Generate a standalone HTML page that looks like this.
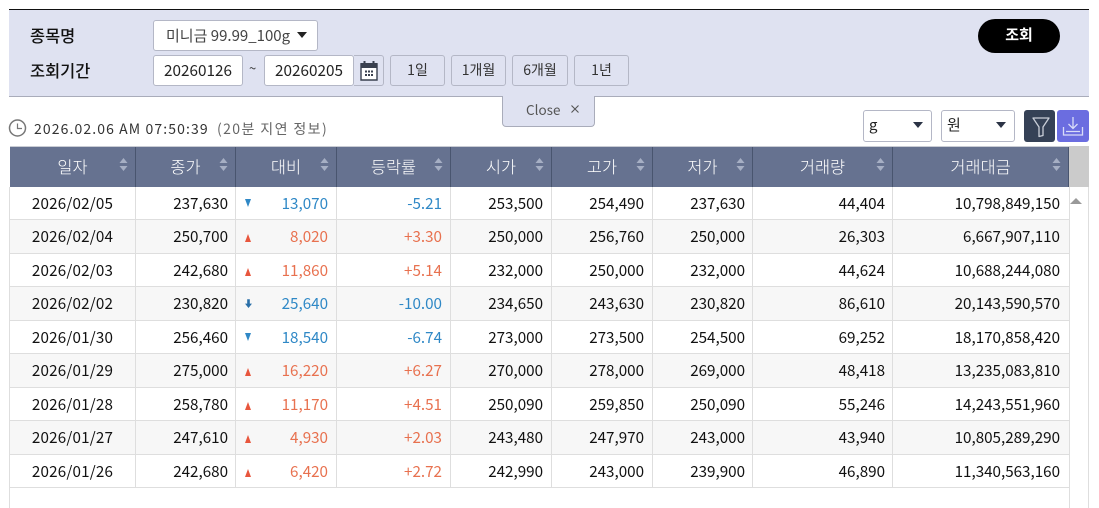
<!DOCTYPE html>
<html><head><meta charset="utf-8">
<style>
html,body{margin:0;padding:0;background:#fff;}
body{width:1099px;height:508px;overflow:hidden;position:relative;font-family:"Noto Sans CJK KR","Liberation Sans",sans-serif;color:#111;}
.a{position:absolute;box-sizing:border-box;white-space:nowrap;}
.box{border:1px solid #b4b7c6;border-radius:3px;background:#fff;font-size:15.3px;line-height:29px;text-align:center;color:#222;}
.btn{background:#dfe2f1;color:#333;font-size:14px;line-height:29px;top:55px;height:31px;border:1px solid #b4b7c6;border-radius:3px;text-align:center;}
.lbl{font-size:16.4px;font-weight:500;color:#111;line-height:20px;}
.hd{top:146px;height:41px;background:#667290;color:#fff;font-size:16.4px;font-weight:300;line-height:40px;text-align:center;border-right:1px solid #49556f;}
.sort{position:absolute;top:10px;width:9px;height:17px;}
.c{font-size:15.2px;line-height:20px;color:#111;text-align:right;}
.d{text-align:center;letter-spacing:.2px;left:10px;width:125px;}
.row{left:10px;width:1059px;height:34px;border-bottom:1px solid #dedede;}
.v{background:#dedede;width:1px;top:187px;height:301px;}
.dn{color:#2f88c6}.up{color:#e8714f}
.sel{border:1px solid #b4b7c6;border-radius:3px;background:#fff;top:110px;height:32px;font-size:15px;line-height:28px;padding-left:5px;color:#222;}
.tri{position:absolute;width:0;height:0;border-left:5.5px solid transparent;border-right:5.5px solid transparent;border-top:6.500px solid #2b3345;}
.u{left:245px;width:0;height:0;border-left:3.5px solid transparent;border-right:3.5px solid transparent;border-bottom:8px solid #e8563d;}
.w{left:245px;width:0;height:0;border-left:3.5px solid transparent;border-right:3.5px solid transparent;border-top:8px solid #2f88c6;}
</style></head><body>
<div class="a" style="left:9px;top:9px;width:1080px;height:88px;background:#dfe2f1;border-top:1px solid #111;border-bottom:1px solid #a9acba;"></div>
<div class="a lbl" style="left:30px;top:25px;">종목명</div>
<div class="a lbl" style="left:30px;top:60px;">조회기간</div>
<div class="a box" style="left:153px;top:20px;width:165px;height:31px;text-align:left;padding-left:12px;font-size:15px;color:#444;">미니금 99.99_100g</div>
<div class="tri" style="left:297px;top:32px;border-top-color:#222;"></div>
<div class="a box" style="left:153px;top:55px;width:90px;height:31px;">20260126</div>
<div class="a" style="left:249px;top:58px;font-size:13px;color:#333;line-height:20px;">~</div>
<div class="a box" style="left:264px;top:55px;width:90px;height:31px;">20260205</div>
<div class="a" style="left:354px;top:55px;width:30px;height:31px;border:1px solid #b4b7c6;border-left:none;border-radius:0 3px 3px 0;background:#dfe2f1;"></div>
<svg class="a" style="left:360px;top:60px;" width="18" height="21" viewBox="0 0 18 21"><path d="M1 4h16v16H1z" fill="#fff" stroke="#39404f" stroke-width="1.4"/><rect x="0.5" y="3" width="17" height="5" fill="#39404f"/><rect x="3.5" y="1" width="2" height="4" fill="#39404f"/><rect x="12.5" y="1" width="2" height="4" fill="#39404f"/><path d="M5 10.500h2v2H5zM8 10.500h2v2H8zM11 10.500h2v2h-2zM5 14h2v2H5zM8 14h2v2H8zM11 14h2v2h-2z" fill="#39404f"/></svg>
<div class="a btn" style="left:390px;width:55px;">1일</div>
<div class="a btn" style="left:451px;width:55px;">1개월</div>
<div class="a btn" style="left:512px;width:56px;">6개월</div>
<div class="a btn" style="left:574px;width:55px;">1년</div>
<div class="a" style="left:502px;top:96px;width:93px;height:31px;background:#dfe2f1;border:1px solid #a9acba;border-top:none;border-radius:0 0 4px 4px;font-size:13.500px;line-height:27px;color:#555;padding-left:23px;">Close</div>
<svg class="a" style="left:571px;top:105px;" width="8" height="8" viewBox="0 0 8 8"><path d="M.5.500l7 7M7.500.500l-7 7" stroke="#555" stroke-width="1.1" fill="none"/></svg>
<div class="a" style="left:978px;top:19px;width:82px;height:34px;background:#000;border-radius:17px;color:#fff;font-size:15px;font-weight:700;line-height:31px;text-align:center;">조회</div>

<svg class="a" style="left:8px;top:118px;" width="20" height="20" viewBox="0 0 20 20"><circle cx="9.500" cy="10" r="8" fill="#fff" stroke="#777" stroke-width="1.500"/><path d="M9.500 5.500V10.500H14" fill="none" stroke="#777" stroke-width="1.200"/></svg>
<div class="a" style="left:34px;top:119px;font-size:14px;line-height:20px;color:#333;letter-spacing:1.1px;">2026.02.06 AM 07:50:39</div>
<div class="a" style="left:217px;top:119px;font-size:14px;line-height:20px;color:#666;letter-spacing:1.4px;">(20분 지연 정보)</div>

<div class="a sel" style="left:863px;width:69px;">g</div><div class="tri" style="left:913px;top:122px;"></div>
<div class="a sel" style="left:941px;width:74px;">원</div><div class="tri" style="left:996px;top:122px;"></div>
<div class="a" style="left:1024px;top:110px;width:31px;height:32px;background:#354156;border-radius:3px;"></div>
<svg class="a" style="left:1032px;top:116px;" width="18" height="22" viewBox="0 0 18 22"><path d="M1 2h16l-6 9v8.500l-4 1v-9.500z" fill="none" stroke="#c9ced8" stroke-width="1.300" stroke-linejoin="round"/></svg>
<div class="a" style="left:1057px;top:110px;width:32px;height:32px;background:#6b6de0;border-radius:3px;"></div>
<svg class="a" style="left:1062px;top:115px;" width="22" height="22" viewBox="0 0 22 22"><path d="M11 2v11M6.500 9l4.500 4.500 4.500-4.500M1.500 12v8h19v-8M4 16.500h14" fill="none" stroke="#d9dcf8" stroke-width="1.300"/></svg>

<div class="a" style="left:10px;top:146px;width:1059px;height:1px;background:#c9ccd4;z-index:3;"></div>
<div class="a hd" style="left:10px;width:126px;"><span>일자</span><svg class="sort" style="left:109px" viewBox="0 0 9 17"><path d="M4.500 2L8.500 7H.5zM4.500 15L.5 10h8z" fill="#a6afc4"/></svg></div>
<div class="a hd" style="left:136px;width:100px;"><span>종가</span><svg class="sort" style="left:83px" viewBox="0 0 9 17"><path d="M4.500 2L8.500 7H.5zM4.500 15L.5 10h8z" fill="#a6afc4"/></svg></div>
<div class="a hd" style="left:236px;width:101px;"><span>대비</span><svg class="sort" style="left:84px" viewBox="0 0 9 17"><path d="M4.500 2L8.500 7H.5zM4.500 15L.5 10h8z" fill="#a6afc4"/></svg></div>
<div class="a hd" style="left:337px;width:114px;"><span>등락률</span><svg class="sort" style="left:97px" viewBox="0 0 9 17"><path d="M4.500 2L8.500 7H.5zM4.500 15L.5 10h8z" fill="#a6afc4"/></svg></div>
<div class="a hd" style="left:451px;width:101px;"><span>시가</span><svg class="sort" style="left:84px" viewBox="0 0 9 17"><path d="M4.500 2L8.500 7H.5zM4.500 15L.5 10h8z" fill="#a6afc4"/></svg></div>
<div class="a hd" style="left:552px;width:101px;"><span>고가</span><svg class="sort" style="left:84px" viewBox="0 0 9 17"><path d="M4.500 2L8.500 7H.5zM4.500 15L.5 10h8z" fill="#a6afc4"/></svg></div>
<div class="a hd" style="left:653px;width:100px;"><span>저가</span><svg class="sort" style="left:83px" viewBox="0 0 9 17"><path d="M4.500 2L8.500 7H.5zM4.500 15L.5 10h8z" fill="#a6afc4"/></svg></div>
<div class="a hd" style="left:753px;width:140px;"><span>거래량</span><svg class="sort" style="left:123px" viewBox="0 0 9 17"><path d="M4.500 2L8.500 7H.5zM4.500 15L.5 10h8z" fill="#a6afc4"/></svg></div>
<div class="a hd" style="left:893px;width:176px;"><span>거래대금</span><svg class="sort" style="left:159px" viewBox="0 0 9 17"><path d="M4.500 2L8.500 7H.5zM4.500 15L.5 10h8z" fill="#a6afc4"/></svg></div>

<div class="a" style="left:1069px;top:146px;width:20px;height:41px;background:#cbcbcb;"></div>
<div class="a" style="left:1069px;top:187px;width:20px;height:321px;background:#fff;border-right:1px solid #dedede;"></div>
<div class="a" style="left:1070px;top:198px;width:0;height:0;border-left:6px solid transparent;border-right:6px solid transparent;border-bottom:6px solid #999;"></div>

<div class="a row" style="top:187px;height:33px;background:#fff;"></div>
<div class="a row" style="top:220px;background:#f7f7f7;"></div>
<div class="a row" style="top:254px;height:33px;background:#fff;"></div>
<div class="a row" style="top:287px;background:#f7f7f7;"></div>
<div class="a row" style="top:321px;height:33px;background:#fff;"></div>
<div class="a row" style="top:354px;background:#f7f7f7;"></div>
<div class="a row" style="top:388px;height:33px;background:#fff;"></div>
<div class="a row" style="top:421px;background:#f7f7f7;"></div>
<div class="a row" style="top:455px;height:33px;background:#fff;"></div>

<div class="a" style="left:9px;top:187px;width:1px;height:321px;background:#dedede;"></div>
<div class="a v" style="left:135px;"></div>
<div class="a v" style="left:235px;"></div>
<div class="a v" style="left:336px;"></div>
<div class="a v" style="left:450px;"></div>
<div class="a v" style="left:551px;"></div>
<div class="a v" style="left:652px;"></div>
<div class="a v" style="left:752px;"></div>
<div class="a v" style="left:892px;"></div>
<div class="a" style="left:1069px;top:187px;width:1px;height:321px;background:#dedede;"></div>

<!-- rows -->
<div class="a c d" style="top:193px;">2026/02/05</div><div class="a c" style="left:136px;width:92px;top:193px;">237,630</div><div class="a w" style="top:199px;"></div><div class="a c dn" style="left:236px;width:92px;top:193px;">13,070</div><div class="a c dn" style="left:337px;width:105px;top:193px;">-5.21</div><div class="a c" style="left:451px;width:92px;top:193px;">253,500</div><div class="a c" style="left:552px;width:92px;top:193px;">254,490</div><div class="a c" style="left:653px;width:92px;top:193px;">237,630</div><div class="a c" style="left:753px;width:132px;top:193px;">44,404</div><div class="a c" style="left:893px;width:167px;top:193px;">10,798,849,150</div>

<div class="a c d" style="top:226px;">2026/02/04</div><div class="a c" style="left:136px;width:92px;top:226px;">250,700</div><div class="a u" style="top:234px;"></div><div class="a c up" style="left:236px;width:92px;top:226px;">8,020</div><div class="a c up" style="left:337px;width:105px;top:226px;">+3.30</div><div class="a c" style="left:451px;width:92px;top:226px;">250,000</div><div class="a c" style="left:552px;width:92px;top:226px;">256,760</div><div class="a c" style="left:653px;width:92px;top:226px;">250,000</div><div class="a c" style="left:753px;width:132px;top:226px;">26,303</div><div class="a c" style="left:893px;width:167px;top:226px;">6,667,907,110</div>

<div class="a c d" style="top:260px;">2026/02/03</div><div class="a c" style="left:136px;width:92px;top:260px;">242,680</div><div class="a u" style="top:268px;"></div><div class="a c up" style="left:236px;width:92px;top:260px;">11,860</div><div class="a c up" style="left:337px;width:105px;top:260px;">+5.14</div><div class="a c" style="left:451px;width:92px;top:260px;">232,000</div><div class="a c" style="left:552px;width:92px;top:260px;">250,000</div><div class="a c" style="left:653px;width:92px;top:260px;">232,000</div><div class="a c" style="left:753px;width:132px;top:260px;">44,624</div><div class="a c" style="left:893px;width:167px;top:260px;">10,688,244,080</div>

<div class="a c d" style="top:293px;">2026/02/02</div><div class="a c" style="left:136px;width:92px;top:293px;">230,820</div><svg class="a" style="left:245px;top:299px;" width="7" height="10" viewBox="0 0 8 11"><path d="M2.500 0h3v5H8l-4 5-4-5h2.500z" fill="#2a6fa8"/></svg><div class="a c dn" style="left:236px;width:92px;top:293px;">25,640</div><div class="a c dn" style="left:337px;width:105px;top:293px;">-10.00</div><div class="a c" style="left:451px;width:92px;top:293px;">234,650</div><div class="a c" style="left:552px;width:92px;top:293px;">243,630</div><div class="a c" style="left:653px;width:92px;top:293px;">230,820</div><div class="a c" style="left:753px;width:132px;top:293px;">86,610</div><div class="a c" style="left:893px;width:167px;top:293px;">20,143,590,570</div>

<div class="a c d" style="top:327px;">2026/01/30</div><div class="a c" style="left:136px;width:92px;top:327px;">256,460</div><div class="a w" style="top:333px;"></div><div class="a c dn" style="left:236px;width:92px;top:327px;">18,540</div><div class="a c dn" style="left:337px;width:105px;top:327px;">-6.74</div><div class="a c" style="left:451px;width:92px;top:327px;">273,000</div><div class="a c" style="left:552px;width:92px;top:327px;">273,500</div><div class="a c" style="left:653px;width:92px;top:327px;">254,500</div><div class="a c" style="left:753px;width:132px;top:327px;">69,252</div><div class="a c" style="left:893px;width:167px;top:327px;">18,170,858,420</div>

<div class="a c d" style="top:360px;">2026/01/29</div><div class="a c" style="left:136px;width:92px;top:360px;">275,000</div><div class="a u" style="top:368px;"></div><div class="a c up" style="left:236px;width:92px;top:360px;">16,220</div><div class="a c up" style="left:337px;width:105px;top:360px;">+6.27</div><div class="a c" style="left:451px;width:92px;top:360px;">270,000</div><div class="a c" style="left:552px;width:92px;top:360px;">278,000</div><div class="a c" style="left:653px;width:92px;top:360px;">269,000</div><div class="a c" style="left:753px;width:132px;top:360px;">48,418</div><div class="a c" style="left:893px;width:167px;top:360px;">13,235,083,810</div>

<div class="a c d" style="top:394px;">2026/01/28</div><div class="a c" style="left:136px;width:92px;top:394px;">258,780</div><div class="a u" style="top:402px;"></div><div class="a c up" style="left:236px;width:92px;top:394px;">11,170</div><div class="a c up" style="left:337px;width:105px;top:394px;">+4.51</div><div class="a c" style="left:451px;width:92px;top:394px;">250,090</div><div class="a c" style="left:552px;width:92px;top:394px;">259,850</div><div class="a c" style="left:653px;width:92px;top:394px;">250,090</div><div class="a c" style="left:753px;width:132px;top:394px;">55,246</div><div class="a c" style="left:893px;width:167px;top:394px;">14,243,551,960</div>

<div class="a c d" style="top:427px;">2026/01/27</div><div class="a c" style="left:136px;width:92px;top:427px;">247,610</div><div class="a u" style="top:435px;"></div><div class="a c up" style="left:236px;width:92px;top:427px;">4,930</div><div class="a c up" style="left:337px;width:105px;top:427px;">+2.03</div><div class="a c" style="left:451px;width:92px;top:427px;">243,480</div><div class="a c" style="left:552px;width:92px;top:427px;">247,970</div><div class="a c" style="left:653px;width:92px;top:427px;">243,000</div><div class="a c" style="left:753px;width:132px;top:427px;">43,940</div><div class="a c" style="left:893px;width:167px;top:427px;">10,805,289,290</div>

<div class="a c d" style="top:461px;">2026/01/26</div><div class="a c" style="left:136px;width:92px;top:461px;">242,680</div><div class="a u" style="top:469px;"></div><div class="a c up" style="left:236px;width:92px;top:461px;">6,420</div><div class="a c up" style="left:337px;width:105px;top:461px;">+2.72</div><div class="a c" style="left:451px;width:92px;top:461px;">242,990</div><div class="a c" style="left:552px;width:92px;top:461px;">243,000</div><div class="a c" style="left:653px;width:92px;top:461px;">239,900</div><div class="a c" style="left:753px;width:132px;top:461px;">46,890</div><div class="a c" style="left:893px;width:167px;top:461px;">11,340,563,160</div>
</body></html>
